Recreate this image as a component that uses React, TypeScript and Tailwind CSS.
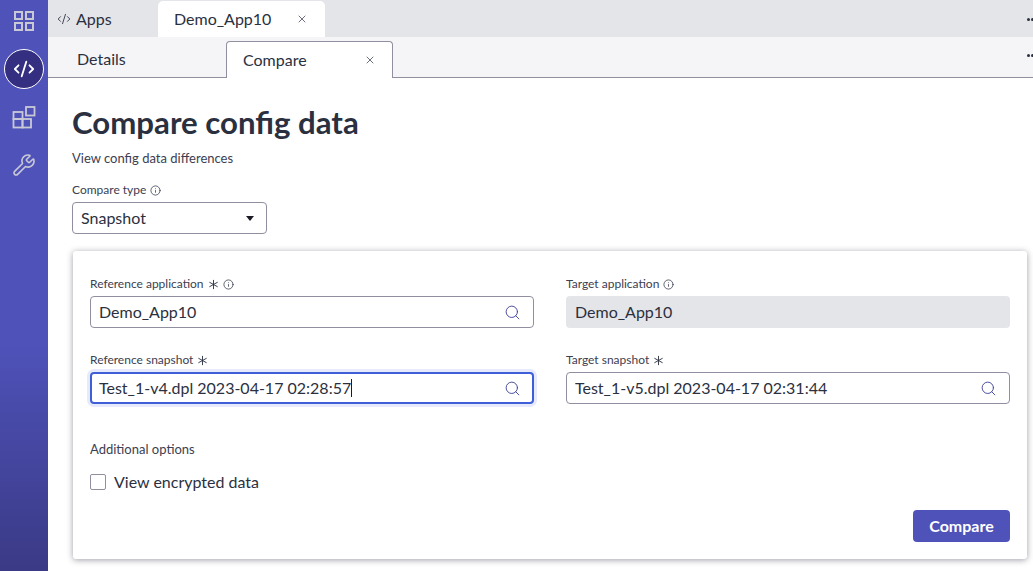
import { Code2, Search, X, Wrench, Info } from "lucide-react";

const ink = "text-[#2b3040]";

const InfoIcon = () => <Info className="w-[11px] h-[11px] text-[#2b3040]" strokeWidth={1.6} />;

const Star = () => (
  <svg viewBox="0 0 12 12" className="w-[11px] h-[11px] text-[#2b3040]" fill="none" stroke="currentColor" strokeWidth="1">
    <path d="M6 1v10M1.5 3.5l9 5M10.5 3.5l-9 5" />
  </svg>
);

const FieldLabel = ({ text, star, info }: { text: string; star?: boolean; info?: boolean }) => (
  <div className="flex items-center gap-[4px] h-[16px] text-[12px] text-[#3c4050]">
    <span>{text}</span>
    {star && <Star />}
    {info && <InfoIcon />}
  </div>
);

const SearchField = ({ value, focused }: { value: string; focused?: boolean }) => (
  <div
    className={
      focused
        ? "flex items-center justify-between h-[32px] mt-[4px] pl-[7px] pr-[11px] rounded-[4px] border-2 border-[#3f5fd9] ring-[3px] ring-[#e6eafb]"
        : "flex items-center justify-between h-[32px] mt-[4px] pl-[8px] pr-[12px] rounded-[4px] border border-[#8f8f9f]"
    }
  >
    <span className={`flex items-center text-[16px] ${ink}`}>
      {value}
      {focused && <span className="w-px h-[18px] bg-[#1b1b25]" />}
    </span>
    <Search className="w-[17px] h-[17px] text-[#3f4199]" strokeWidth={1.3} />
  </div>
);

const NavGrid = () => (
  <svg viewBox="0 0 22 22" className="w-[22px] h-[22px] text-[#c9c9d6]" fill="none" stroke="currentColor" strokeWidth="2">
    <rect x="2" y="2" width="7" height="7" />
    <rect x="13" y="2" width="7" height="7" />
    <rect x="2" y="13" width="7" height="7" />
    <rect x="13" y="13" width="7" height="7" />
  </svg>
);

const NavBlocks = () => (
  <svg viewBox="0 0 24 24" className="w-[24px] h-[24px] text-[#c9c9d6]" fill="none" stroke="currentColor" strokeWidth="1.8">
    <rect x="1.5" y="6" width="9" height="7" />
    <rect x="1.5" y="13" width="9" height="8.5" />
    <rect x="10.5" y="13" width="8.5" height="8.5" />
    <rect x="14" y="1" width="8.5" height="8.5" />
  </svg>
);

export default function App() {
  return (
    <div className="flex w-[1033px] h-[571px] overflow-hidden bg-white font-['Lato',sans-serif]">
      {/* Sidebar */}
      <div className="flex flex-col items-center w-[48px] h-full shrink-0 bg-gradient-to-b from-[#4f52b9] from-60% to-[#3a3a86]">
        <div className="h-[22px] mt-[10px]">
          <NavGrid />
        </div>
        <div className="flex items-center justify-center mt-[17px] w-[40px] h-[40px] shrink-0 rounded-full bg-[#342f80] border border-white">
          <Code2 className="w-[22px] h-[22px] text-white" strokeWidth={2} />
        </div>
        <div className="h-[24px] mt-[17px]">
          <NavBlocks />
        </div>
        <div className="h-[24px] mt-[23px]">
          <Wrench className="w-[24px] h-[24px] text-[#c9c9d6]" strokeWidth={1.6} />
        </div>
      </div>

      <div className="flex flex-col flex-1 min-w-0">
        {/* Top tabs */}
        <div className="relative flex items-end h-[37px] bg-[#e4e5e9] shrink-0">
          <div className="flex items-center gap-[5px] w-[110px] h-[36px] pl-[9px]">
            <Code2 className="w-[14px] h-[14px] text-[#2b3040]" strokeWidth={1.5} />
            <span className={`text-[16px] ${ink}`}>Apps</span>
          </div>
          <div className="flex items-center justify-between w-[167px] h-[36px] pl-[16px] pr-[17px] bg-white rounded-t-[5px]">
            <span className={`text-[16px] ${ink}`}>Demo_App10</span>
            <X className="w-[12px] h-[12px] text-[#3c4050]" strokeWidth={1.5} />
          </div>
          <span className="absolute right-[-1px] top-[18px] flex gap-[1px]">
            <span className="w-[3px] h-[3px] bg-[#2b3040] rounded-full" />
            <span className="w-[3px] h-[3px] bg-[#2b3040] rounded-full" />
          </span>
        </div>

        {/* Sub tabs */}
        <div className="relative flex items-end h-[41px] pt-[4px] bg-[#f5f5f8] border-b border-[#8f8f9f] shrink-0">
          <div className={`flex items-center w-[178px] h-[36px] pl-[29px] text-[16px] ${ink}`}>Details</div>
          <div className="flex items-center justify-between w-[167px] h-[37px] -mb-px pl-[16px] pr-[16px] bg-white border border-b-0 border-[#8f8f9f] rounded-t-[4px]">
            <span className={`text-[16px] ${ink}`}>Compare</span>
            <X className="w-[12px] h-[12px] text-[#3c4050]" strokeWidth={1.5} />
          </div>
          <span className="absolute right-[-1px] top-[17px] flex gap-[1px]">
            <span className="w-[3px] h-[3px] bg-[#2b3040] rounded-full" />
            <span className="w-[3px] h-[3px] bg-[#2b3040] rounded-full" />
          </span>
        </div>

        {/* Page */}
        <div className="flex-1 pl-[24px] pr-[6px] pt-[24px]">
          <h1 className="h-[42px] text-[31.2px] leading-[40px] font-bold text-[#2b3040]">Compare config data</h1>
          <p className="mt-[6px] h-[16px] text-[13px] leading-[16px] text-[#3c4050]">View config data differences</p>

          <div className="mt-[16px]">
            <FieldLabel text="Compare type" info />
          </div>
          <div className="flex items-center justify-between w-[195px] h-[32px] mt-[4px] pl-[8px] pr-[12px] rounded-[4px] border border-[#8f8f9f]">
            <span className={`text-[16px] ${ink}`}>Snapshot</span>
            <span className="w-0 h-0 border-x-[4px] border-x-transparent border-t-[5px] border-t-[#1b1b25]" />
          </div>

          {/* Compare form card */}
          <div className="w-[954px] h-[308px] mt-[17px] ml-px px-[17px] pt-[25px] rounded-[3px] bg-white shadow-[0_1px_6px_rgba(40,40,60,0.45)]">
            <div className="grid grid-cols-[444px_444px] gap-x-[32px]">
              <div>
                <FieldLabel text="Reference application" star info />
                <SearchField value="Demo_App10" />
              </div>
              <div>
                <FieldLabel text="Target application" info />
                <div className={`flex items-center h-[32px] mt-[4px] pl-[9px] rounded-[4px] bg-[#e4e5e9] text-[16px] ${ink}`}>
                  Demo_App10
                </div>
              </div>
              <div className="mt-[24px]">
                <FieldLabel text="Reference snapshot" star />
                <SearchField value="Test_1-v4.dpl 2023-04-17 02:28:57" focused />
              </div>
              <div className="mt-[24px]">
                <FieldLabel text="Target snapshot" star />
                <SearchField value="Test_1-v5.dpl 2023-04-17 02:31:44" />
              </div>
            </div>

            <div className="mt-[37px] h-[16px] text-[13px] leading-[16px] text-[#3c4050]">Additional options</div>
            <div className="flex items-center gap-[8px] mt-[13px]">
              <span className="w-[16px] h-[16px] rounded-[2px] border border-[#8f8f9f]" />
              <span className={`text-[16px] ${ink}`}>View encrypted data</span>
            </div>

            <div className="flex justify-end mt-[16px]">
              <button className="w-[97px] h-[32px] rounded-[4px] bg-[#4f52b9] text-[16px] font-bold text-white">Compare</button>
            </div>
          </div>
        </div>
      </div>
    </div>
  );
}
